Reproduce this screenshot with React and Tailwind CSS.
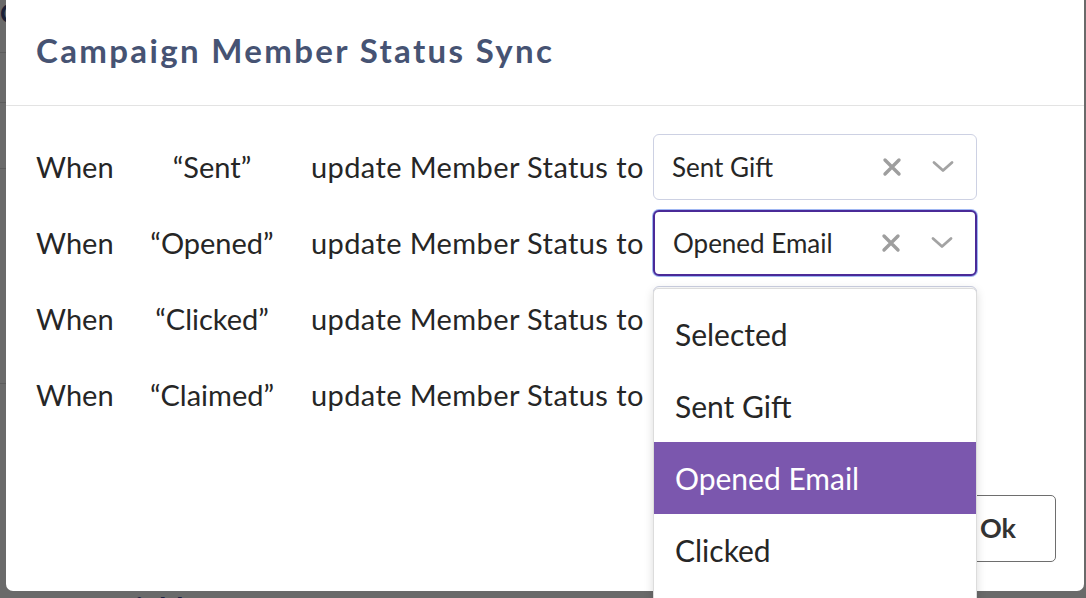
import React from "react";

const rows = [
  { q: "“Sent”", v: "Sent Gift", focus: false },
  { q: "“Opened”", v: "Opened Email", focus: true },
  { q: "“Clicked”", v: "", focus: false },
  { q: "“Claimed”", v: "", focus: false },
];

function XIcon() {
  return (
    <svg width="20" height="20" viewBox="0 0 20 20" fill="none">
      <path d="M3 3L17 17M17 3L3 17" stroke="#9e9e9e" strokeWidth="3.4" strokeLinecap="round" />
    </svg>
  );
}

function Chevron() {
  return (
    <svg width="22" height="14" viewBox="0 0 22 14" fill="none">
      <path d="M2 2.5L11 10.5L20 2.5" stroke="#a3a3a3" strokeWidth="2.8" strokeLinecap="round" strokeLinejoin="round" />
    </svg>
  );
}

function Select({ value, focus }) {
  return (
    <div
      className={
        "flex h-[66px] w-[324px] items-center rounded-[6px] bg-white pl-[18px] pr-[22px] " +
        (focus
          ? "border-2 border-[#4a2a98] shadow-[0_0_0_1px_#9fb6f2]"
          : "border border-[#cdd1e3]")
      }
    >
      <span className="flex-1 text-[26px] text-[#262626]">{value}</span>
      {value && (
        <div className="flex items-center gap-[30px]">
          <XIcon />
          <Chevron />
        </div>
      )}
    </div>
  );
}

export default function App() {
  return (
    <div
      className="relative h-[598px] w-[1086px] overflow-hidden bg-[#6a6a6a]"
      style={{ fontFamily: "Lato, 'Noto Sans', sans-serif" }}
    >
      {/* background page */}
      <div className="absolute left-0 top-[-6px] text-[26px] font-bold text-[#1a2036]">C</div>
      <div className="absolute left-0 top-[52px] h-px w-[8px] bg-[#5c5c5c]" />
      <div className="absolute left-0 top-[102px] h-px w-[8px] bg-[#5c5c5c]" />
      <div className="absolute left-0 top-[168px] h-px w-[8px] bg-[#5c5c5c]" />
      <div className="absolute left-0 top-[383px] h-px w-[8px] bg-[#5c5c5c]" />
      <div className="absolute left-[8px] top-[586px] text-[30px] font-bold text-[#1b2240]">Custom Fields</div>

      {/* modal */}
      <div className="absolute left-[6px] top-0 flex h-[591px] w-[1078px] flex-col rounded-b-[7px] bg-white">
        <div className="h-[106px] border-b border-[#e3e3e3] pl-[30px] pt-[26px]">
          <h1 className="text-[33px] font-bold tracking-[2.35px] text-[#465373]">
            Campaign Member Status Sync
          </h1>
        </div>

        <div className="flex flex-col gap-[10px] pl-[30px] pt-[28px]">
          {rows.map((r, i) => (
            <div key={i} className="flex items-center text-[29px] text-[#262626]">
              <span className="w-[106px]">When</span>
              <span className="w-[140px] text-center">{r.q}</span>
              <span className="ml-[29px] w-[342px] tracking-[0.4px]">update Member Status to</span>
              <Select value={r.v} focus={r.focus} />
            </div>
          ))}
        </div>

        <div className="flex justify-end pr-[28px] pt-[67px]">
          <button className="h-[67px] w-[116px] rounded-[5px] border border-[#6e6e6e] text-[27px] font-bold text-[#333]">
            Ok
          </button>
        </div>

        {/* dropdown menu */}
        <div className="absolute left-[647px] top-[288px] w-[324px] rounded-t-[5px] border border-[#dcdcdc] bg-white pt-[9px] shadow-[0_2px_10px_rgba(0,0,0,0.15)]">
          {["Selected", "Sent Gift", "Opened Email", "Clicked", "Claimed"].map((o) => (
            <div
              key={o}
              className={
                "flex h-[72px] items-center pl-[21px] text-[30px] " +
                (o === "Opened Email" ? "bg-[#7b57ae] text-white" : "text-[#262626]")
              }
            >
              {o}
            </div>
          ))}
        </div>
      </div>
    </div>
  );
}
